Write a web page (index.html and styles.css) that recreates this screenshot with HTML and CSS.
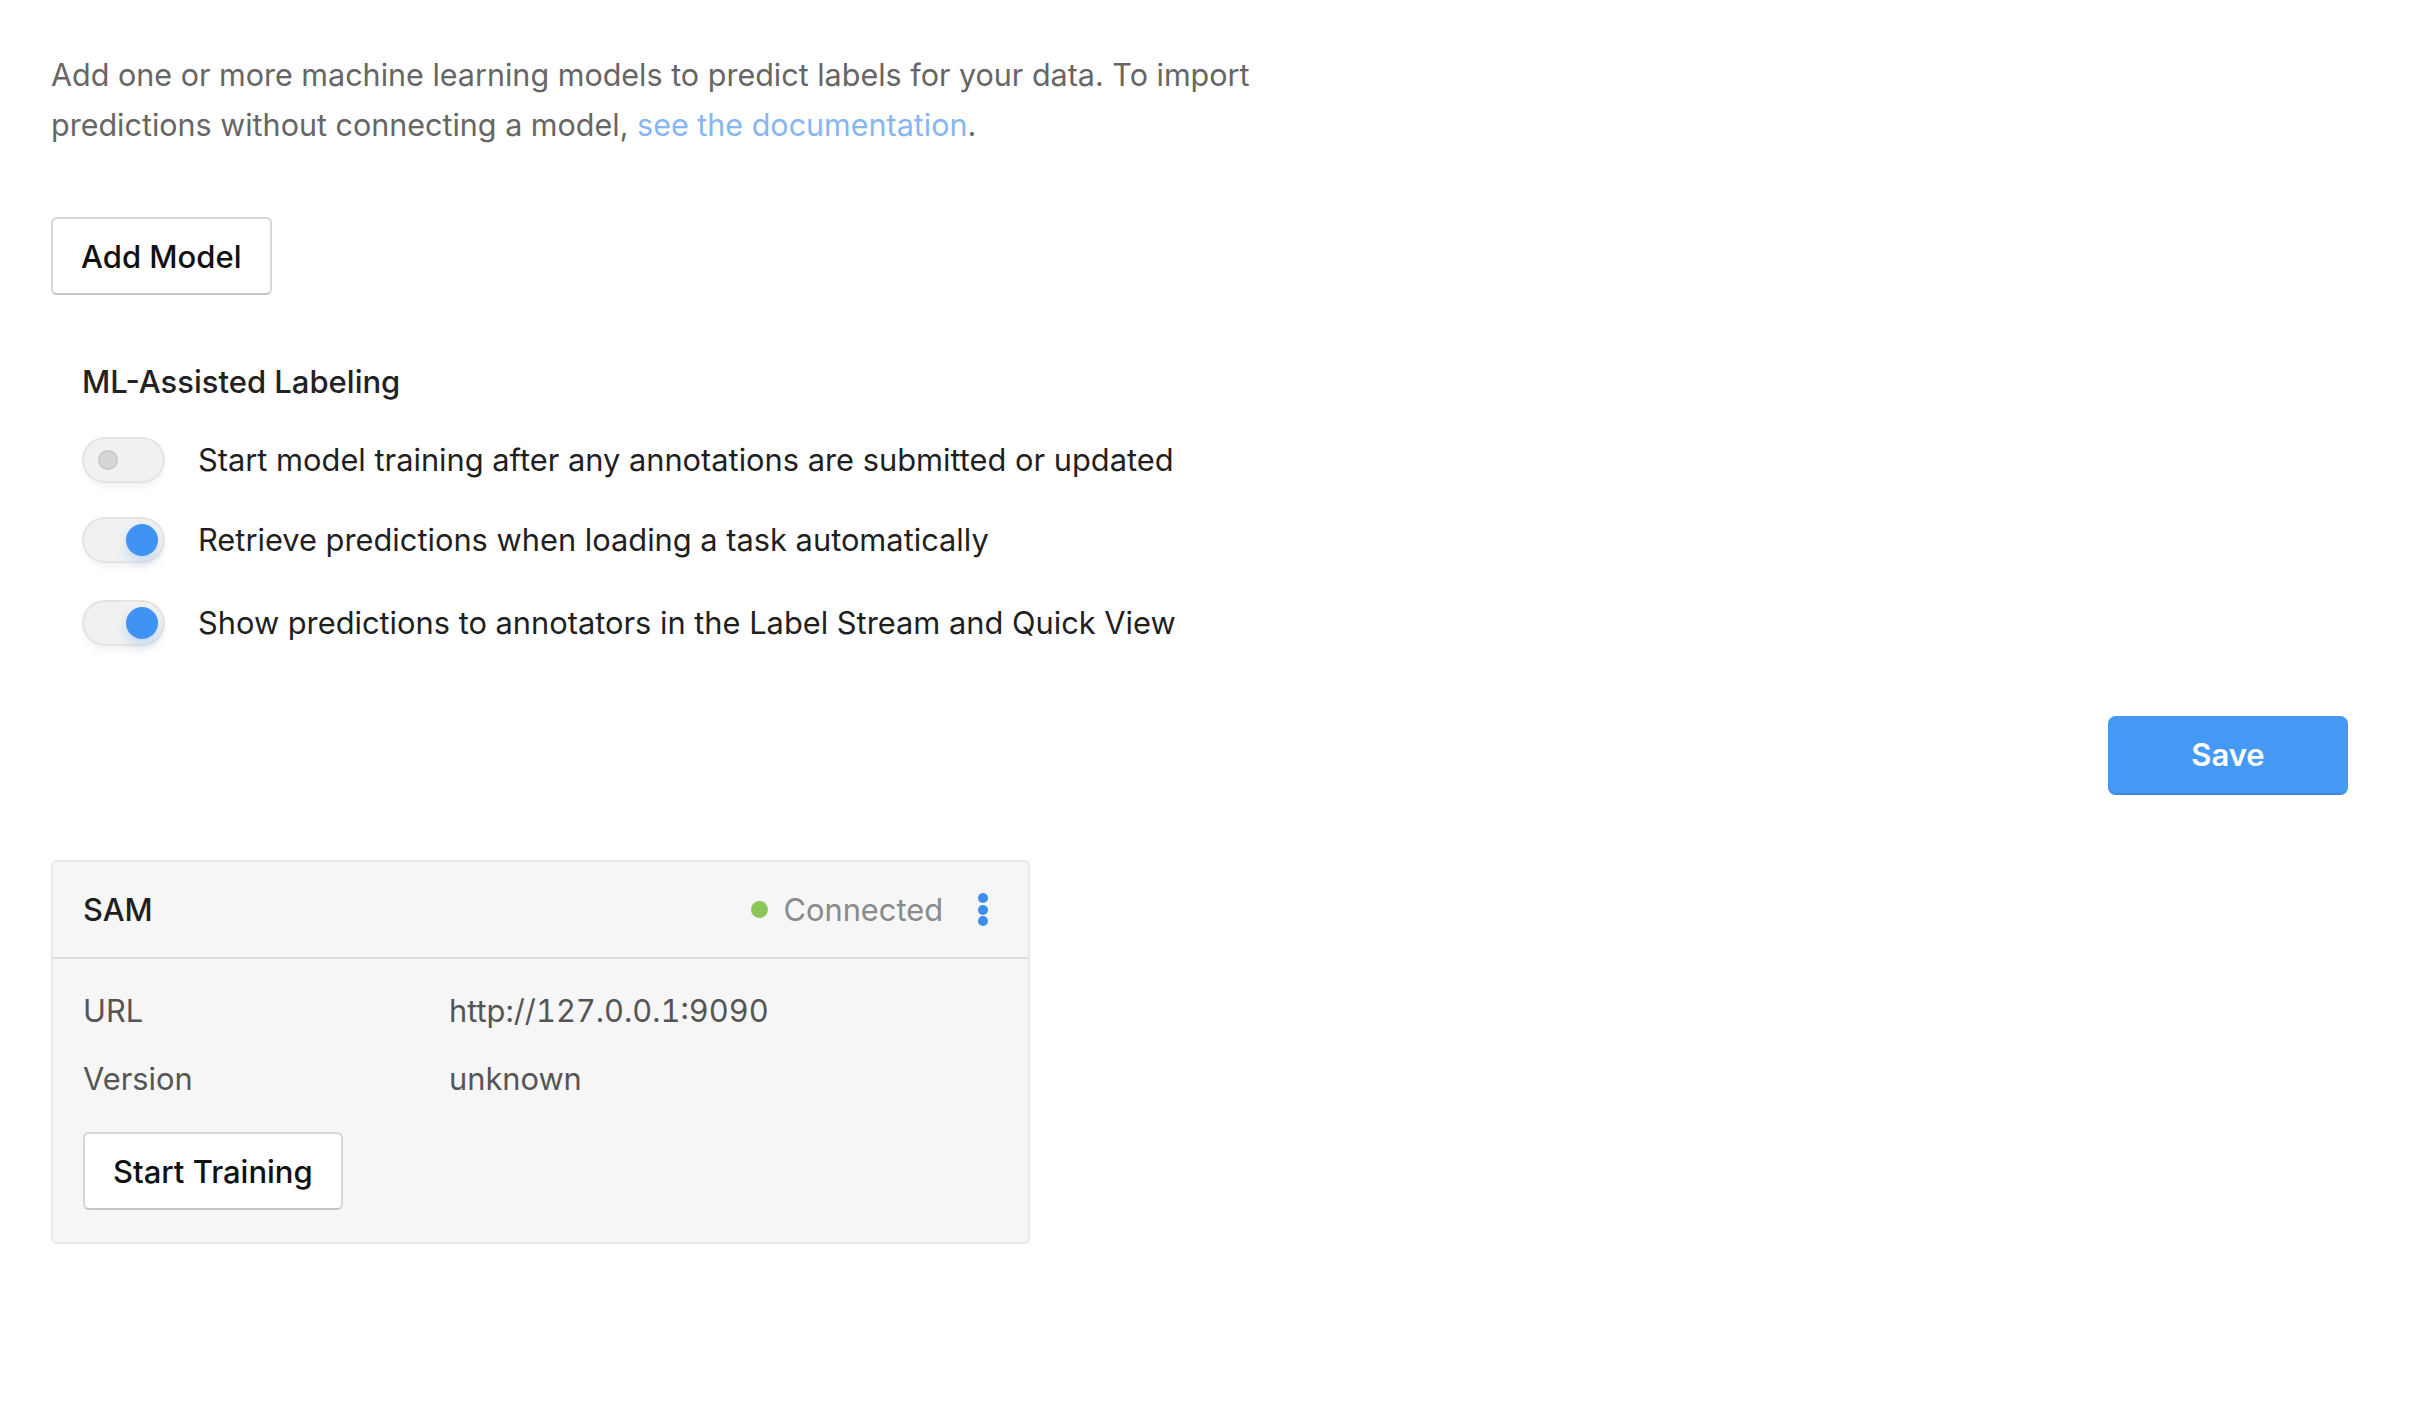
FILE: index.html
```html
<!DOCTYPE html>
<html>
<head>
<meta charset="utf-8">
<link rel="stylesheet" href="styles.css">
</head>
<body>
<div class="page">
  <p class="intro">Add one or more machine learning models to predict labels for your data. To import predictions without connecting a model, <a class="link" href="#">see the documentation</a>.</p>
  <div class="actions">
    <button class="btn">Add Model</button>
  </div>
  <section class="ml">
    <h3 class="ml-title">ML-Assisted Labeling</h3>
    <div class="toggles">
      <label class="toggle-row">
        <span class="toggle"><span class="knob off"></span></span>
        <span class="toggle-text">Start model training after any annotations are submitted or updated</span>
      </label>
      <label class="toggle-row">
        <span class="toggle on"><span class="knob"></span></span>
        <span class="toggle-text">Retrieve predictions when loading a task automatically</span>
      </label>
      <label class="toggle-row row3">
        <span class="toggle on"><span class="knob"></span></span>
        <span class="toggle-text">Show predictions to annotators in the Label Stream and Quick View</span>
      </label>
    </div>
  </section>
  <div class="save-bar">
    <button class="btn-primary">Save</button>
  </div>
  <div class="card">
    <div class="card-head">
      <span class="card-title">SAM</span>
      <div class="status">
        <span class="dot"></span>
        <span class="status-text">Connected</span>
        <span class="menu"><i></i><i></i><i></i></span>
      </div>
    </div>
    <div class="card-body">
      <div class="info">
        <span class="info-label">URL</span>
        <span class="info-value url">http://127.0.0.1:9090</span>
        <span class="info-label">Version</span>
        <span class="info-value">unknown</span>
      </div>
      <button class="btn">Start Training</button>
    </div>
  </div>
</div>
</body>
</html>
```
FILE: styles.css
```css
* { box-sizing: border-box; }
html, body { margin: 0; padding: 0; background: #fff; }
body {
  font-family: Inter, "Noto Sans", sans-serif;
  font-size: 30.8px;
  color: #1f1f1f;
}
.page {
  padding: 50px 70px 0 51px;
}
.intro {
  margin: 0;
  max-width: 1250px;
  font-size: 30.5px;
  line-height: 50px;
  color: #666;
}
.link { color: #86b6f3; text-decoration: none; }
.actions { margin-top: 67px; }
.btn {
  font-family: inherit;
  font-size: 31px;
  font-weight: 500;
  color: #111;
  background: #fff;
  border: 2px solid #d6d6d6;
  border-bottom-color: #c4c4c4;
  border-radius: 6px;
  height: 78px;
  padding: 0 28px;
  cursor: pointer;
}
.ml { padding-left: 31px; margin-top: 65px; }
.ml-title {
  margin: 0;
  font-size: 31px;
  line-height: 44px;
  font-weight: 500;
  color: #222;
}
.toggles {
  margin-top: 33px;
  display: flex;
  flex-direction: column;
  gap: 34px;
}
.row3 { margin-top: 3px; }
.toggle-row {
  display: flex;
  align-items: center;
  gap: 33px;
  height: 46px;
}
.toggle {
  position: relative;
  width: 83px;
  height: 46px;
  border-radius: 23px;
  background: #f1f1f1;
  border: 2px solid #e4e4e4;
  box-shadow: 0 6px 10px -4px rgba(0,0,0,0.08);
  flex: none;
}
.knob {
  position: absolute;
  right: 5px;
  top: 5px;
  width: 32px;
  height: 32px;
  border-radius: 50%;
  background: #4093f2;
  box-shadow: 0 6px 12px rgba(64,147,242,0.25);
}
.knob.off {
  right: auto;
  left: 14px;
  top: 11px;
  width: 20px;
  height: 20px;
  background: #d6d6d6;
  border: 2px solid #c9c9c9;
  box-shadow: none;
}
.toggle-text { color: #1f1f1f; line-height: 46px; }
.save-bar {
  display: flex;
  justify-content: flex-end;
  margin-top: 70px;
}
.btn-primary {
  font-family: inherit;
  font-size: 31px;
  font-weight: 600;
  color: #fff;
  background: #4599f5;
  border: none;
  border-bottom: 2px solid #3b88de;
  border-radius: 8px;
  width: 240px;
  height: 79px;
  cursor: pointer;
}
.card {
  margin-top: 65px;
  width: 979px;
  background: #f6f6f6;
  border: 2px solid #e8e8e8;
  border-radius: 6px;
}
.card-head {
  display: flex;
  align-items: center;
  justify-content: space-between;
  height: 97px;
  padding: 0 38px 0 30px;
  border-bottom: 2px solid #e0e0e0;
}
.card-title { font-weight: 500; color: #1f1f1f; }
.status { display: flex; align-items: center; }
.dot {
  width: 17px; height: 17px; border-radius: 50%;
  background: #8cc65a;
  margin-right: 16px;
}
.status-text { color: #8a8a8a; }
.menu {
  display: flex; flex-direction: column; gap: 1.5px;
  margin-left: 33px;
  padding: 0 2px;
}
.menu i {
  display: block; width: 10px; height: 10px; border-radius: 50%;
  background: #3d8ef0;
}
.card-body {
  padding: 30px 30px 32px;
}
.info {
  display: grid;
  grid-template-columns: 366px 1fr;
  row-gap: 24px;
  line-height: 44px;
  color: #555;
  margin-bottom: 31px;
}
.url {
  font-variant-numeric: tabular-nums;
}
```
